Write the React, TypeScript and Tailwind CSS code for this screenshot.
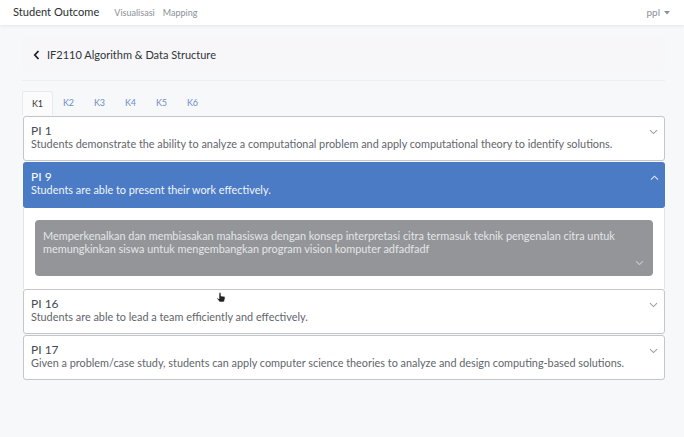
import React from "react";

const font = { fontFamily: "Lato, 'Noto Sans', sans-serif" };

function ChevronDown({ className = "" }: { className?: string }) {
  return (
    <svg width="9" height="6" viewBox="0 0 9 6" className={className} fill="none" stroke="currentColor" strokeWidth="1.1">
      <path d="M1 1.2 L4.5 4.6 L8 1.2" />
    </svg>
  );
}
function ChevronUp({ className = "" }: { className?: string }) {
  return (
    <svg width="9" height="6" viewBox="0 0 9 6" className={className} fill="none" stroke="currentColor" strokeWidth="1.1">
      <path d="M1 4.6 L4.5 1.2 L8 4.6" />
    </svg>
  );
}

function Card({ title, desc, gap = true }: { title: string; desc: string; gap?: boolean }) {
  return (
    <div className={`${gap ? "mt-px" : ""} flex h-[45px] items-start justify-between rounded-[3px] border border-[#c4c6c9] bg-white pl-[7px] pr-[6px] pt-[7px]`}>
      <div className="flex flex-col">
        <div className="text-[12px] leading-[14px] text-[#444a50]">{title}</div>
        <div className="text-[10.87px] leading-[12px] text-[#5f656b]">{desc}</div>
      </div>
      <ChevronDown className="mt-[5px] text-[#9aa0a6]" />
    </div>
  );
}

export default function App() {
  return (
    <div className="relative h-[437px] w-[684px] overflow-hidden bg-[#f6f8f9]" style={font}>
      {/* navbar */}
      <div className="flex h-[25px] items-center justify-between bg-white pl-[13px] pr-[14px] shadow-[0_1px_3px_rgba(0,0,0,0.08)]">
        <div className="flex items-center">
          <span className="text-[11.1px] text-[#2b2f33]">Student Outcome</span>
          <span className="ml-[15px] text-[9px] text-[#8b9096]">Visualisasi</span>
          <span className="ml-[8px] text-[9px] text-[#8b9096]">Mapping</span>
        </div>
        <div className="flex items-center gap-[4px] text-[10px] text-[#8b9096]">
          <span>ppl</span>
          <svg width="6" height="4" viewBox="0 0 6 4"><path d="M0 0 L6 0 L3 3.5 Z" fill="#8b9096" /></svg>
        </div>
      </div>

      <div className="pl-[22px] pr-[19px] pt-[13px]">
        {/* header */}
        <div className="flex h-[33px] items-center rounded-[3px] bg-[#f7f7f9] pl-[11px] pt-px">
          <svg width="7" height="10" viewBox="0 0 7 10" className="text-[#222]"><path d="M5.5 1 L1.8 5 L5.5 9" fill="none" stroke="currentColor" strokeWidth="1.8" /></svg>
          <span className="ml-[7px] text-[11px] text-[#2f3438]">IF2110 Algorithm &amp; Data Structure</span>
        </div>
        <div className="mt-[9px] h-px bg-[#eceef0]" />

        {/* tabs */}
        <div className="mt-[10px] flex h-[24px] items-stretch">
          <div className="flex w-[31px] items-center justify-center rounded-t-[3px] border border-b-0 border-[#e8eaec] bg-[#fbfbfc] text-[9px] text-[#333]">K1</div>
          {["K2", "K3", "K4", "K5", "K6"].map((k) => (
            <div key={k} className="flex w-[31px] items-center justify-center text-[9px] text-[#6f8fc9]">{k}</div>
          ))}
        </div>

        {/* accordion */}
        <div className="ml-px flex flex-col">
          <Card title="PI 1" desc="Students demonstrate the ability to analyze a computational problem and apply computational theory to identify solutions." />
          <div className="mt-px flex h-[46px] items-start justify-between rounded-[3px] bg-[#4a7bc4] pl-[8px] pr-[6px] pt-[8px]">
            <div className="flex flex-col">
              <div className="text-[12px] leading-[14px] text-white">PI 9</div>
              <div className="text-[10.87px] leading-[12px] text-[#f1f5fb]">Students are able to present their work effectively.</div>
            </div>
            <ChevronUp className="mt-[5px] text-[#dfe8f5]" />
          </div>
          <div className="h-[81px] border-x border-[#e2e4e6] bg-white px-[11px] pt-[12px]">
            <div className="relative h-[56px] rounded-[4px] bg-[#939599] pl-[8px] pr-[20px] pt-[9px] text-[10.9px] leading-[13px] text-[#e4e5e7]">
              Memperkenalkan dan membiasakan mahasiswa dengan konsep interpretasi citra termasuk teknik pengenalan citra untuk memungkinkan siswa untuk mengembangkan program vision komputer adfadfadf
              <ChevronDown className="absolute bottom-[10px] right-[9px] text-[#c8cacd]" />
            </div>
          </div>
          <Card gap={false} title="PI 16" desc="Students are able to lead a team efficiently and effectively." />
          <Card title="PI 17" desc="Given a problem/case study, students can apply computer science theories to analyze and design computing-based solutions." />
        </div>
      </div>

      {/* cursor */}
      <svg className="absolute left-[216px] top-[292px]" width="10" height="12" viewBox="0 0 10 12">
        <path d="M3 1 L3 7 L2 6 Q1 5.5 1 6.5 L3.5 10 L8 10 L9 7 L9 5 Q9 4.3 8 4.3 L5 4 L5 1 Q4 0 3 1 Z" fill="#222" stroke="#fff" strokeWidth="0.6" />
      </svg>
    </div>
  );
}
